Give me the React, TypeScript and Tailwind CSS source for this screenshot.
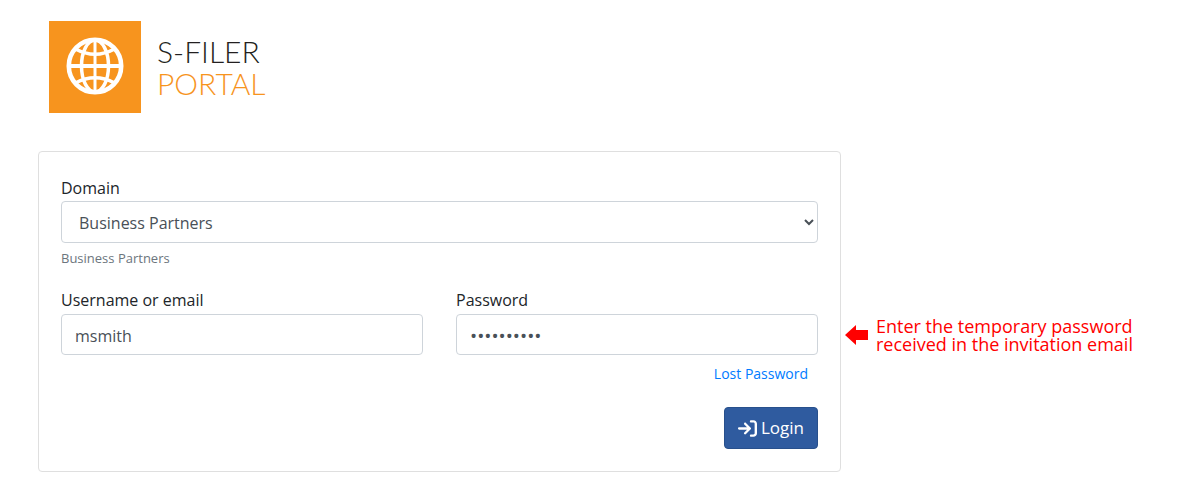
import { FaArrowRightToBracket } from "react-icons/fa6";

function GlobeIcon() {
  return (
    <svg viewBox="0 0 92 92" className="size-[92px] shrink-0 bg-[#f7941e]" aria-hidden="true">
      <g fill="none" stroke="#fff" strokeWidth="3.5">
        <circle cx="46" cy="45" r="26.2" strokeWidth="4.6" />
        <ellipse cx="46" cy="45" rx="13.5" ry="26" />
        <path d="M46 18V72" strokeWidth="3" />
        <path d="M19 45H73" strokeWidth="4.2" />
        <path d="M26.5 28Q46 38.5 65.5 28M26.5 62Q46 51.5 65.5 62" />
      </g>
    </svg>
  );
}

function Logo() {
  return (
    <header className="ml-[49px] flex items-center gap-4">
      <GlobeIcon />
      <h1 className="font-['Lato',sans-serif] text-[30px] leading-8 font-light">
        <span className="block text-[#231f20]">S-FILER</span>
        <span className="block text-[#f7941e]">PORTAL</span>
      </h1>
    </header>
  );
}

const field =
  "block w-full rounded border border-[#ced4da] bg-white text-[#495057] outline-none focus:border-[#80bdff]";

export default function App() {
  return (
    <main className="bg-white pt-[21px] pb-8 font-['Open_Sans','Noto_Sans',sans-serif] text-[#212529]">
      <Logo />
      <div className="mt-[38px] flex items-start pl-[38px]">
        <form
          className="min-w-0 grow rounded border border-[#dfdfdf] px-[22px] pt-6 pb-[22px]"
          onSubmit={(e) => e.preventDefault()}
        >
          <label htmlFor="domain" className="mb-px block text-base leading-6">
            Domain
          </label>
          <select
            id="domain"
            aria-describedby="domain-help"
            className={`${field} h-[42px] pt-0.5 pr-0.5 pl-[13px] text-base`}
            defaultValue="bp"
          >
            <option value="bp">Business Partners</option>
          </select>
          <p id="domain-help" className="mt-1 text-[13px] leading-[22px] text-[#6c757d]">
            Business Partners
          </p>
          <div className="mt-[19px] grid grid-cols-2 gap-x-[33px]">
            <div>
              <label htmlFor="username" className="mb-0.5 block text-base leading-6">
                Username or email
              </label>
              <input
                id="username"
                type="text"
                defaultValue="msmith"
                className={`${field} h-[41px] px-[13px] pt-0.5 text-base`}
              />
            </div>
            <div>
              <label htmlFor="password" className="mb-0.5 block text-base leading-6">
                Password
              </label>
              <input
                id="password"
                type="password"
                defaultValue="temporary1"
                className={`${field} h-[41px] px-[13px] pt-0.5 text-[19px]`}
              />
            </div>
          </div>
          <div className="mt-[7px] flex flex-col items-end gap-[21px]">
            <a href="#lost-password" className="mr-[10px] text-[14px] leading-6 text-[#007bff]">
              Lost Password
            </a>
            <button
              type="submit"
              className="flex h-[42px] items-center gap-1 rounded border border-[#28508c] bg-[#2f5b9f] px-[13px] text-[17px] text-white"
            >
              <FaArrowRightToBracket className="size-[19px]" aria-hidden="true" />
              Login
            </button>
          </div>
        </form>
        <aside className="mt-[166px] flex w-[359px] shrink-0 items-center gap-2 pl-1 text-lg leading-[18px] text-[#f00]">
          <svg viewBox="0 0 23 20" className="h-5 w-[23px] shrink-0" aria-hidden="true">
            <path d="M0 10 11 0V5H23V15H11V20Z" fill="#f00" />
          </svg>
          <p>
            Enter the temporary password
            <br />
            received in the invitation email
          </p>
        </aside>
      </div>
    </main>
  );
}
